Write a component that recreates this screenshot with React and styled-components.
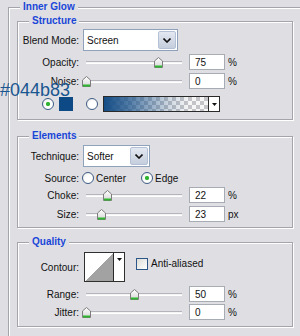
import styled, { createGlobalStyle } from "styled-components";

const GlobalStyle = createGlobalStyle`
  html, body { margin: 0; padding: 0; }
  body {
    width: 300px;
    height: 336px;
    overflow: hidden;
    background: #dfdfe3;
    font-family: "Liberation Sans", Arial, sans-serif;
    font-size: 10px;
    color: #111;
  }
`;

const Page = styled.div`
  position: relative;
  width: 300px;
  height: 336px;
  padding: 1px 0 0 8px;
  box-sizing: border-box;
  overflow: hidden;
`;

const Box = styled.fieldset`
  box-sizing: border-box;
  width: ${(p) => p.$w}px;
  margin: ${(p) => p.$top || 0}px 0 0;
  padding: 0;
  min-width: 0;
  border: 1px solid #a4a4ac;
  box-shadow: inset 1px 1px 0 #fff, 1px 1px 0 #fff;
`;

const Legend = styled.legend`
  margin-left: 11px;
  padding: 0 3px;
  line-height: 12px;
  font-weight: bold;
  font-size: 10px;
  color: #1a46d8;
  background: #dfdfe3;
`;

const Body = styled.div`
  display: flex;
  flex-direction: column;
  padding: ${(p) => p.$pad};
`;

const Row = styled.div`
  display: flex;
  align-items: ${(p) => p.$align || "center"};
  margin-top: ${(p) => p.$gap || 0}px;
  padding-left: ${(p) => p.$indent || 0}px;
`;

const Label = styled.span`
  width: 61px;
  flex: none;
  text-align: right;
  white-space: nowrap;
  align-self: ${(p) => (p.$top ? "flex-start" : "center")};
  margin-top: ${(p) => p.$top || 0}px;
`;

const Select = styled.div`
  box-sizing: border-box;
  width: ${(p) => p.$w}px;
  height: 22px;
  margin-left: 4px;
  display: flex;
  align-items: stretch;
  background: #fff;
  border: 1px solid #8ea2bc;
`;

const SelectText = styled.span`
  flex: 1;
  display: flex;
  align-items: center;
  padding-left: 3px;
  font-size: 10px;
`;

const SelectButton = styled.span`
  width: 16px;
  margin: 1px;
  display: flex;
  align-items: center;
  justify-content: center;
  border: 1px solid #b3c0d6;
  border-radius: 2px;
  background: linear-gradient(#e3e8f1, #c5cedd);
`;

const Slider = styled.div`
  position: relative;
  width: 104px;
  height: 16px;
  margin-left: 3px;
  flex: none;
`;

const Track = styled.div`
  position: absolute;
  left: 4px;
  right: 4px;
  top: 7px;
  height: 1px;
  background: #f4f4f4;
  border-top: 1px solid #b4b4bc;
  border-bottom: 1px solid #fff;
`;

const ThumbWrap = styled.svg`
  position: absolute;
  top: 3px;
`;

const Field = styled.div`
  box-sizing: border-box;
  width: 36px;
  height: 16px;
  margin-left: 3px;
  padding-left: 5px;
  display: flex;
  align-items: center;
  background: #fff;
  border: 1px solid #a7acb4;
`;

const Unit = styled.span`
  margin-left: 3px;
`;

const Radio = styled.span`
  box-sizing: border-box;
  width: 12px;
  height: 12px;
  flex: none;
  margin-left: ${(p) => p.$ml || 0}px;
  border-radius: 50%;
  border: 1px solid #3e5c86;
  background: radial-gradient(circle at 60% 60%, #fff 40%, #e4e4e0 100%);
  display: flex;
  align-items: center;
  justify-content: center;
  &::after {
    content: "";
    display: ${(p) => (p.$on ? "block" : "none")};
    width: 4px;
    height: 4px;
    border-radius: 50%;
    background: #2bb02b;
    box-shadow: 0 0 1px #6fd66f;
  }
`;

const RadioText = styled.span`
  margin-left: 2px;
`;

const Swatch = styled.span`
  width: 14px;
  height: 14px;
  margin-left: 5px;
  background: #0d4a85;
`;

const GradientPick = styled.div`
  box-sizing: border-box;
  width: 117px;
  height: 16px;
  margin-left: 5px;
  display: flex;
  border: 1px solid #2a2a2a;
`;

const GradientBar = styled.span`
  flex: 1;
  background:
    linear-gradient(to right, #154d86 0%, rgba(28, 84, 140, 0.75) 25%, rgba(40, 90, 140, 0.2) 62%, rgba(40, 90, 140, 0) 82%),
    repeating-conic-gradient(#c4c4c8 0 25%, #f6f6f6 0 50%) 0 0 / 8px 8px;
`;

const ArrowCell = styled.span`
  width: 10px;
  display: flex;
  justify-content: center;
  align-items: ${(p) => (p.$top ? "flex-start" : "center")};
  padding-top: ${(p) => (p.$top ? 5 : 0)}px;
  background: #fff;
  border-left: 1px solid #2a2a2a;
`;

const Contour = styled.div`
  box-sizing: border-box;
  width: 41px;
  height: 30px;
  margin-left: 5px;
  display: flex;
  border: 1px solid #2f2f2f;
`;

const ContourCurve = styled.span`
  flex: 1;
  background: linear-gradient(to top left, #a2a2a2 50%, #fff 50%);
`;

const Check = styled.span`
  box-sizing: border-box;
  width: 12px;
  height: 12px;
  margin: 6px 0 0 11px;
  border: 1px solid #2e5588;
  background: linear-gradient(135deg, #dcdcd8, #fff);
`;

const CheckText = styled.span`
  margin: 6px 0 0 3px;
  line-height: 12px;
`;

const HexNote = styled.div`
  position: absolute;
  left: 0;
  top: 81px;
  font-family: "Liberation Sans", Arial, sans-serif;
  font-size: 18px;
  line-height: 18px;
  color: #1a5690;
`;

const Chevron = () => (
  <svg width="8" height="5" viewBox="0 0 8 5">
    <path d="M0.5 0.5 L4 4 L7.5 0.5" fill="none" stroke="#111" strokeWidth="1.6" />
  </svg>
);

const Caret = () => (
  <svg width="5" height="3" viewBox="0 0 5 3">
    <polygon points="0,0 5,0 2.5,3" fill="#111" />
  </svg>
);

const Thumb = ({ x }) => (
  <ThumbWrap width="9" height="11" viewBox="0 0 9 11" style={{ left: x }}>
    <defs>
      <linearGradient id="tg" x1="0" y1="0" x2="0" y2="1">
        <stop offset="0" stopColor="#ffffff" />
        <stop offset="1" stopColor="#d6d6d6" />
      </linearGradient>
    </defs>
    <polygon points="0.5,4 4.5,0.5 8.5,4 8.5,10.5 0.5,10.5" fill="url(#tg)" stroke="#7d7d7d" />
    <rect x="1" y="8.5" width="7" height="2" fill="#2fb52f" />
  </ThumbWrap>
);

const SliderRow = ({ label, value, max = 100, unit = "%", gap }) => (
  <Row $gap={gap}>
    <Label>{label}</Label>
    <Slider>
      <Track />
      <Thumb x={4 + Math.round((value / max) * 96) - 4} />
    </Slider>
    <Field>{value}</Field>
    <Unit>{unit}</Unit>
  </Row>
);

export default function App() {
  return (
    <Page>
      <GlobalStyle />
      <Box $w={300}>
        <Legend>Inner Glow</Legend>
        <Body $pad="2px 0 30px 8px">
          <Box $w={276}>
            <Legend>Structure</Legend>
            <Body $pad="2px 0 7px">
              <Row>
                <Label>Blend Mode:</Label>
                <Select $w={95}>
                  <SelectText>Screen</SelectText>
                  <SelectButton><Chevron /></SelectButton>
                </Select>
              </Row>
              <SliderRow label="Opacity:" value={75} gap={3} />
              <SliderRow label="Noise:" value={0} gap={3} />
              <Row $gap={7} $indent={24}>
                <Radio $on />
                <Swatch />
                <Radio $ml={13} />
                <GradientPick>
                  <GradientBar />
                  <ArrowCell><Caret /></ArrowCell>
                </GradientPick>
              </Row>
            </Body>
          </Box>

          <Box $w={276} $top={10}>
            <Legend>Elements</Legend>
            <Body $pad="3px 0 5px">
              <Row>
                <Label>Technique:</Label>
                <Select $w={67}>
                  <SelectText>Softer</SelectText>
                  <SelectButton><Chevron /></SelectButton>
                </Select>
              </Row>
              <Row $gap={5}>
                <Label>Source:</Label>
                <Radio $ml={3} />
                <RadioText>Center</RadioText>
                <Radio $ml={15} $on />
                <RadioText>Edge</RadioText>
              </Row>
              <SliderRow label="Choke:" value={22} gap={3} />
              <SliderRow label="Size:" value={23} max={150} unit="px" gap={3} />
            </Body>
          </Box>

          <Box $w={276} $top={8}>
            <Legend>Quality</Legend>
            <Body $pad="4px 0 6px">
              <Row $align="flex-start">
                <Label $top={10}>Contour:</Label>
                <Contour>
                  <ContourCurve />
                  <ArrowCell $top><Caret /></ArrowCell>
                </Contour>
                <Check />
                <CheckText>Anti-aliased</CheckText>
              </Row>
              <SliderRow label="Range:" value={50} gap={4} />
              <SliderRow label="Jitter:" value={0} gap={2} />
            </Body>
          </Box>
        </Body>
      </Box>
      <HexNote>#044b83</HexNote>
    </Page>
  );
}
